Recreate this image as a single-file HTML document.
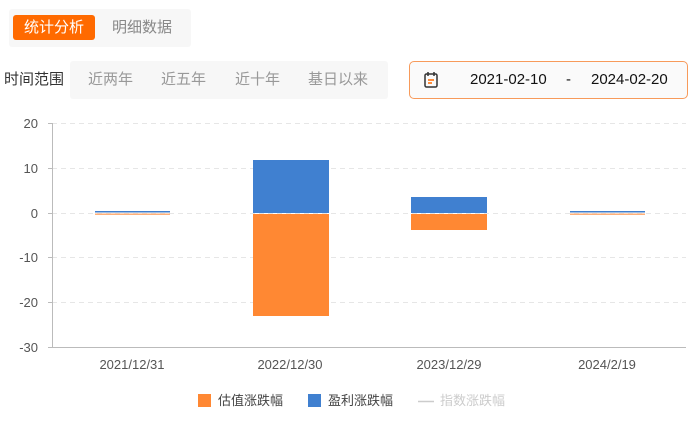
<!DOCTYPE html>
<html><head><meta charset="utf-8"><style>
body{margin:0;width:700px;height:430px;background:#fff;font-family:"Liberation Sans","Noto Sans CJK SC",sans-serif;position:relative;overflow:hidden}
.a{position:absolute;white-space:nowrap}
</style></head><body>
<div class="a" style="left:9px;top:9px;width:182px;height:38px;background:#f7f7f7;border-radius:3px"></div>
<div class="a" style="left:13px;top:15px;width:82px;height:25px;background:#ff6a00;border-radius:3px;color:#fff;font-size:15px;line-height:25px;text-align:center">统计分析</div>
<div class="a" style="left:112px;top:15px;font-size:15px;line-height:25px;color:#888">明细数据</div>

<div class="a" style="left:4px;top:70px;font-size:15px;line-height:20px;color:#333">时间范围</div>
<div class="a" style="left:70px;top:61px;width:318px;height:38px;background:#f7f7f7;border-radius:3px"></div>
<div class="a" style="left:88px;top:70px;font-size:15px;line-height:20px;color:#999">近两年</div>
<div class="a" style="left:161px;top:70px;font-size:15px;line-height:20px;color:#999">近五年</div>
<div class="a" style="left:235px;top:70px;font-size:15px;line-height:20px;color:#999">近十年</div>
<div class="a" style="left:308px;top:70px;font-size:15px;line-height:20px;color:#999">基日以来</div>

<div class="a" style="left:409px;top:61px;width:277px;height:36px;border:1px solid #f79a5a;border-radius:5px;background:#fafafa"></div>
<svg class="a" style="left:423px;top:71px" width="16" height="18" viewBox="0 0 16 18"><rect x="2" y="3" width="12" height="13" rx="1.5" fill="none" stroke="#333" stroke-width="1.5"/><line x1="5" y1="1" x2="5" y2="5" stroke="#333" stroke-width="1.5"/><line x1="11" y1="1" x2="11" y2="5" stroke="#333" stroke-width="1.5"/><line x1="5" y1="9" x2="11" y2="9" stroke="#ff6a00" stroke-width="1.5"/><line x1="5" y1="12" x2="9" y2="12" stroke="#ff6a00" stroke-width="1.5"/></svg>
<div class="a" style="left:470px;top:70px;font-size:15px;line-height:20px;color:#111">2021-02-10</div>
<div class="a" style="left:566px;top:70px;font-size:15px;line-height:20px;color:#111">-</div>
<div class="a" style="left:591px;top:70px;font-size:15px;line-height:20px;color:#111">2024-02-20</div>

<svg class="a" style="left:0;top:0" width="700" height="430">
<g stroke="#e6e6e6" stroke-dasharray="5,4" stroke-width="1">
<line x1="52" y1="123.5" x2="686" y2="123.5"/><line x1="52" y1="168.5" x2="686" y2="168.5"/><line x1="52" y1="213.5" x2="686" y2="213.5"/><line x1="52" y1="257.5" x2="686" y2="257.5"/><line x1="52" y1="302.5" x2="686" y2="302.5"/>
</g>
<line x1="52.5" y1="123" x2="52.5" y2="347" stroke="#bbb"/>
<line x1="52" y1="347.5" x2="686" y2="347.5" stroke="#bbb"/>
<g stroke="#bbb"><line x1="48" y1="123.5" x2="52" y2="123.5"/><line x1="48" y1="168.5" x2="52" y2="168.5"/><line x1="48" y1="213.5" x2="52" y2="213.5"/><line x1="48" y1="257.5" x2="52" y2="257.5"/><line x1="48" y1="302.5" x2="52" y2="302.5"/><line x1="48" y1="347.5" x2="52" y2="347.5"/></g>
<g font-size="13" fill="#555" text-anchor="end" font-family="Liberation Sans,sans-serif">
<text x="38" y="128">20</text><text x="38" y="173">10</text><text x="38" y="218">0</text><text x="38" y="262">-10</text><text x="38" y="307">-20</text><text x="38" y="352">-30</text>
</g>
<g font-size="13" fill="#555" text-anchor="middle" font-family="Liberation Sans,sans-serif">
<text x="132" y="369">2021/12/31</text><text x="290" y="369">2022/12/30</text><text x="449" y="369">2023/12/29</text><text x="607" y="369">2024/2/19</text>
</g>
<rect x="95" y="211" width="75" height="1.5" fill="#3f7fcf"/><rect x="95" y="213.5" width="75" height="1.5" fill="#ffb07a"/>
<rect x="570" y="211" width="75" height="1.5" fill="#3f7fcf"/><rect x="570" y="213.5" width="75" height="1.5" fill="#ffb07a"/>
<rect x="253" y="160" width="76" height="53" fill="#4080d0"/>
<rect x="253" y="214" width="76" height="102" fill="#ff8833"/>
<rect x="411" y="197" width="76" height="16" fill="#4080d0"/>
<rect x="411" y="214" width="76" height="16" fill="#ff8833"/>
<rect x="198" y="394" width="13" height="13" fill="#ff8833"/>
<rect x="308" y="394" width="13" height="13" fill="#4080d0"/>
<line x1="418" y1="401.5" x2="434" y2="401.5" stroke="#ccc" stroke-width="1.5"/>
</svg>
<div class="a" style="left:218px;top:393px;font-size:13px;line-height:16px;color:#444">估值涨跌幅</div>
<div class="a" style="left:328px;top:393px;font-size:13px;line-height:16px;color:#444">盈利涨跌幅</div>
<div class="a" style="left:440px;top:393px;font-size:13px;line-height:16px;color:#ccc">指数涨跌幅</div>
</body></html>
